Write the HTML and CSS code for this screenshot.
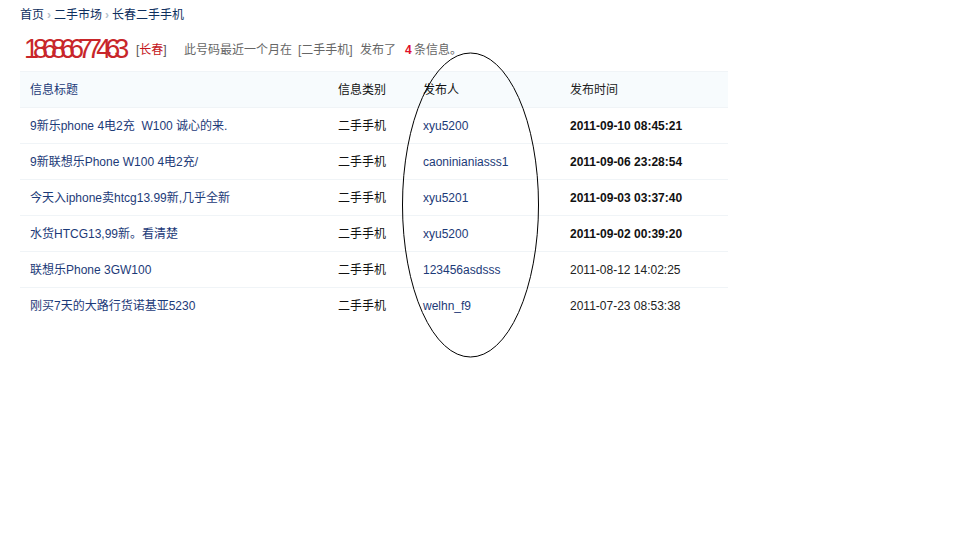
FILE: index.html
```html
<!DOCTYPE html>
<html lang="zh">
<head>
<meta charset="utf-8">
<title>长春二手手机</title>
<link rel="stylesheet" href="styles.css">
</head>
<body>
<div class="page">
  <nav class="crumbs"><a>首页</a><span class="sep">›</span><a>二手市场</a><span class="sep">›</span><a>长春二手手机</a></nav>
  <div class="summary">
    <span class="phone">18686677463</span>
    <span class="city">[<b>长春</b>]</span>
    <span class="note">此号码最近一个月在</span>
    <span class="cat">[二手手机]</span>
    <span class="pub">发布了</span>
    <strong class="count">4</strong>
    <span class="tail">条信息。</span>
  </div>
  <div class="table">
    <div class="row head"><span class="c1">信息标题</span><span class="c2">信息类别</span><span class="c3">发布人</span><span class="c4">发布时间</span></div>
    <div class="row"><a class="c1">9新乐phone 4电2充&nbsp; W100 诚心的来.</a><span class="c2">二手手机</span><a class="c3">xyu5200</a><b class="c4">2011-09-10 08:45:21</b></div>
    <div class="row"><a class="c1">9新联想乐Phone W100 4电2充/</a><span class="c2">二手手机</span><a class="c3">caoninianiasss1</a><b class="c4">2011-09-06 23:28:54</b></div>
    <div class="row"><a class="c1">今天入iphone卖htcg13.99新,几乎全新</a><span class="c2">二手手机</span><a class="c3">xyu5201</a><b class="c4">2011-09-03 03:37:40</b></div>
    <div class="row"><a class="c1">水货HTCG13,99新。看清楚</a><span class="c2">二手手机</span><a class="c3">xyu5200</a><b class="c4">2011-09-02 00:39:20</b></div>
    <div class="row"><a class="c1">联想乐Phone 3GW100</a><span class="c2">二手手机</span><a class="c3">123456asdsss</a><span class="c4">2011-08-12 14:02:25</span></div>
    <div class="row last"><a class="c1">刚买7天的大路行货诺基亚5230</a><span class="c2">二手手机</span><a class="c3">welhn_f9</a><span class="c4">2011-07-23 08:53:38</span></div>
  </div>
</div>
<svg class="ellipse" width="960" height="540" viewBox="0 0 960 540" aria-hidden="true"><ellipse cx="470.5" cy="205" rx="68" ry="152" fill="none" stroke="#000" stroke-width="1"/></svg>
</body>
</html>
```

FILE: styles.css
```css
html, body { margin: 0; padding: 0; background: #fff; }
body { font: 12px/1 "Liberation Sans", "Noto Sans CJK SC", sans-serif; color: #111; width: 960px; height: 540px; overflow: hidden; position: relative; }
.page { padding: 8px 0 0 20px; width: 708px; }
.crumbs { height: 14px; line-height: 14px; color: #0e2f5e; display: flex; }
.crumbs .sep { color: #b5c2cc; width: 10px; text-align: center; font-weight: bold; }
.summary { height: 49px; margin-top: 0; display: flex; align-items: center; color: #666; padding-top: 6px; box-sizing: border-box; }
.phone { font-size: 27px; letter-spacing: -6px; color: #c8262a; width: 116px; padding-left: 4px; box-sizing: border-box; font-weight: normal; }
.city { color: #555; width: 48px; }
.city b { font-weight: normal; color: #c4161c; }
.note { width: 114px; }
.cat { width: 62px; }
.pub { width: 45px; }
.count { color: #e0102a; width: 9px; }
.table { border-top: 1px solid #f0f4f7; }
.row { display: flex; height: 35px; align-items: center; border-bottom: 1px solid #f0f4f7; }
.row.last { border-bottom: 0; }
.row.head { background: #f7fbfd; color: #111; }
.row a { color: #1c3a78; }
.c1 { width: 308px; margin-left: 10px; color: #1c3a78; }
.c2 { width: 85px; color: #111; }
.c3 { width: 147px; }
.c4 { color: #222; }
b.c4 { color: #111; }
.ellipse { position: absolute; left: 0; top: 0; pointer-events: none; }
```
